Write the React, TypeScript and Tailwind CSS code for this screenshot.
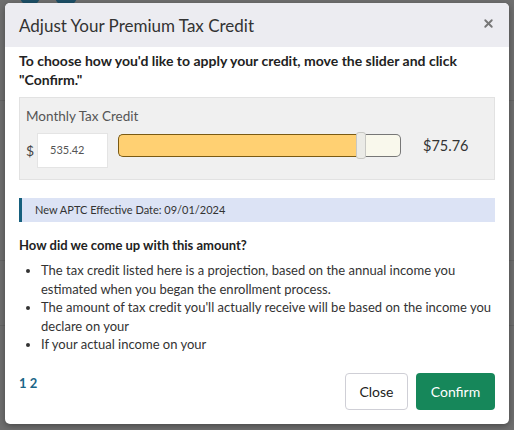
import { X } from 'lucide-react'

const bullets = [
  'The tax credit listed here is a projection, based on the annual income you estimated when you began the enrollment process.',
  "The amount of tax credit you'll actually receive will be based on the income you declare on your",
  'If your actual income on your',
]

export default function App() {
  return (
    <div
      className="relative w-[514px] h-[430px] overflow-hidden bg-[#6f6f6f] text-[#222]"
      style={{ fontFamily: 'Lato, "Open Sans", sans-serif' }}
    >
      {/* dimmed page behind */}
      <div className="absolute left-[20px] top-[-14px] w-[20px] h-[20px] rounded-full bg-[#1d4f66]" />
      <div className="absolute left-[55px] top-[-14px] w-[22px] h-[20px] rounded-full bg-[#1d4f66]" />
      <div className="absolute left-0 top-[100px] w-[514px] h-[1px] bg-[#656565]" />
      <div className="absolute left-0 top-[260px] w-[514px] h-[1px] bg-[#656565]" />
      <div className="absolute left-0 top-[325px] w-[514px] h-[1px] bg-[#656565]" />

      {/* Modal */}
      <div className="absolute left-[5px] top-[3px] w-[504px] h-[421px] bg-white rounded-[5px] overflow-hidden shadow-[0_2px_6px_rgba(0,0,0,0.35)] flex flex-col">
        {/* Header */}
        <div className="h-[44px] shrink-0 bg-[#ececf1] flex items-center justify-between pl-[14px] pr-[14px]">
          <h2 className="text-[17px] text-[#333] leading-none">Adjust Your Premium Tax Credit</h2>
          <X className="w-[13px] h-[13px] text-[#777] -mt-[4px]" strokeWidth={3.5} />
        </div>

        {/* Body */}
        <div className="px-[14px] pt-[4px]">
          <p className="text-[14px] font-bold leading-[19px] text-[#222] pr-[20px]">
            To choose how you'd like to apply your credit, move the slider and click "Confirm."
          </p>

          {/* Slider panel */}
          <div className="mt-[8px] h-[83px] bg-[#f0f0f0] border border-[#e2e2e2] px-[6px] pt-[9px]">
            <p className="text-[13.5px] text-[#555] leading-[18px]">Monthly Tax Credit</p>
            <div className="mt-[8px] flex items-center">
              <span className="text-[14px] text-[#444] w-[11px]">$</span>
              <div className="w-[71px] h-[35px] bg-white border border-[#e4e4e4] flex items-center pl-[12px] text-[11px] text-[#555]">
                535.42
              </div>
              <div className="relative ml-[10px] w-[283px] h-[23px] -mt-[11px] flex">
                <div className="w-[243px] h-full bg-[#ffd072] border border-[#7a5a14] border-r-0 rounded-l-[5px]" />
                <div className="flex-1 h-full bg-[#f9f8ec] border border-[#777] border-l-0 rounded-r-[5px]" />
                <div className="absolute left-[238px] top-[-2px] w-[10px] h-[27px] bg-[#ebebe7] border border-[#c8c8c4] rounded-[3px]" />
              </div>
              <span className="ml-[22px] -mt-[10px] text-[14.5px] text-[#333]">$75.76</span>
            </div>
          </div>

          {/* Info */}
          <div className="mt-[18px] h-[24px] bg-[#dce3f5] border-l-[3px] border-[#16607e] flex items-center pl-[13px] text-[11px] text-[#333]">
            New APTC Effective Date: 09/01/2024
          </div>

          <p className="mt-[14px] text-[13px] font-bold text-[#222] leading-[19px]">How did we come up with this amount?</p>
          <ul className="mt-[6px] pl-[22px] list-disc text-[13px] leading-[18.5px] text-[#333] pr-[2px]">
            {bullets.map(b => (
              <li key={b}>{b}</li>
            ))}
          </ul>
        </div>

        {/* Footer */}
        <div className="mt-auto mb-[14px] px-[14px] flex items-start justify-between">
          <span className="mt-[2px] text-[13px] leading-[16px] font-bold text-[#1a6688]">1 2</span>
          <div className="flex gap-[8px]">
            <button className="w-[63px] h-[37px] border border-[#cfcfd6] rounded-[4px] bg-white text-[14px] text-[#222]">
              Close
            </button>
            <button className="w-[79px] h-[37px] rounded-[4px] bg-[#16875a] text-[14px] text-white">
              Confirm
            </button>
          </div>
        </div>
      </div>
    </div>
  )
}
